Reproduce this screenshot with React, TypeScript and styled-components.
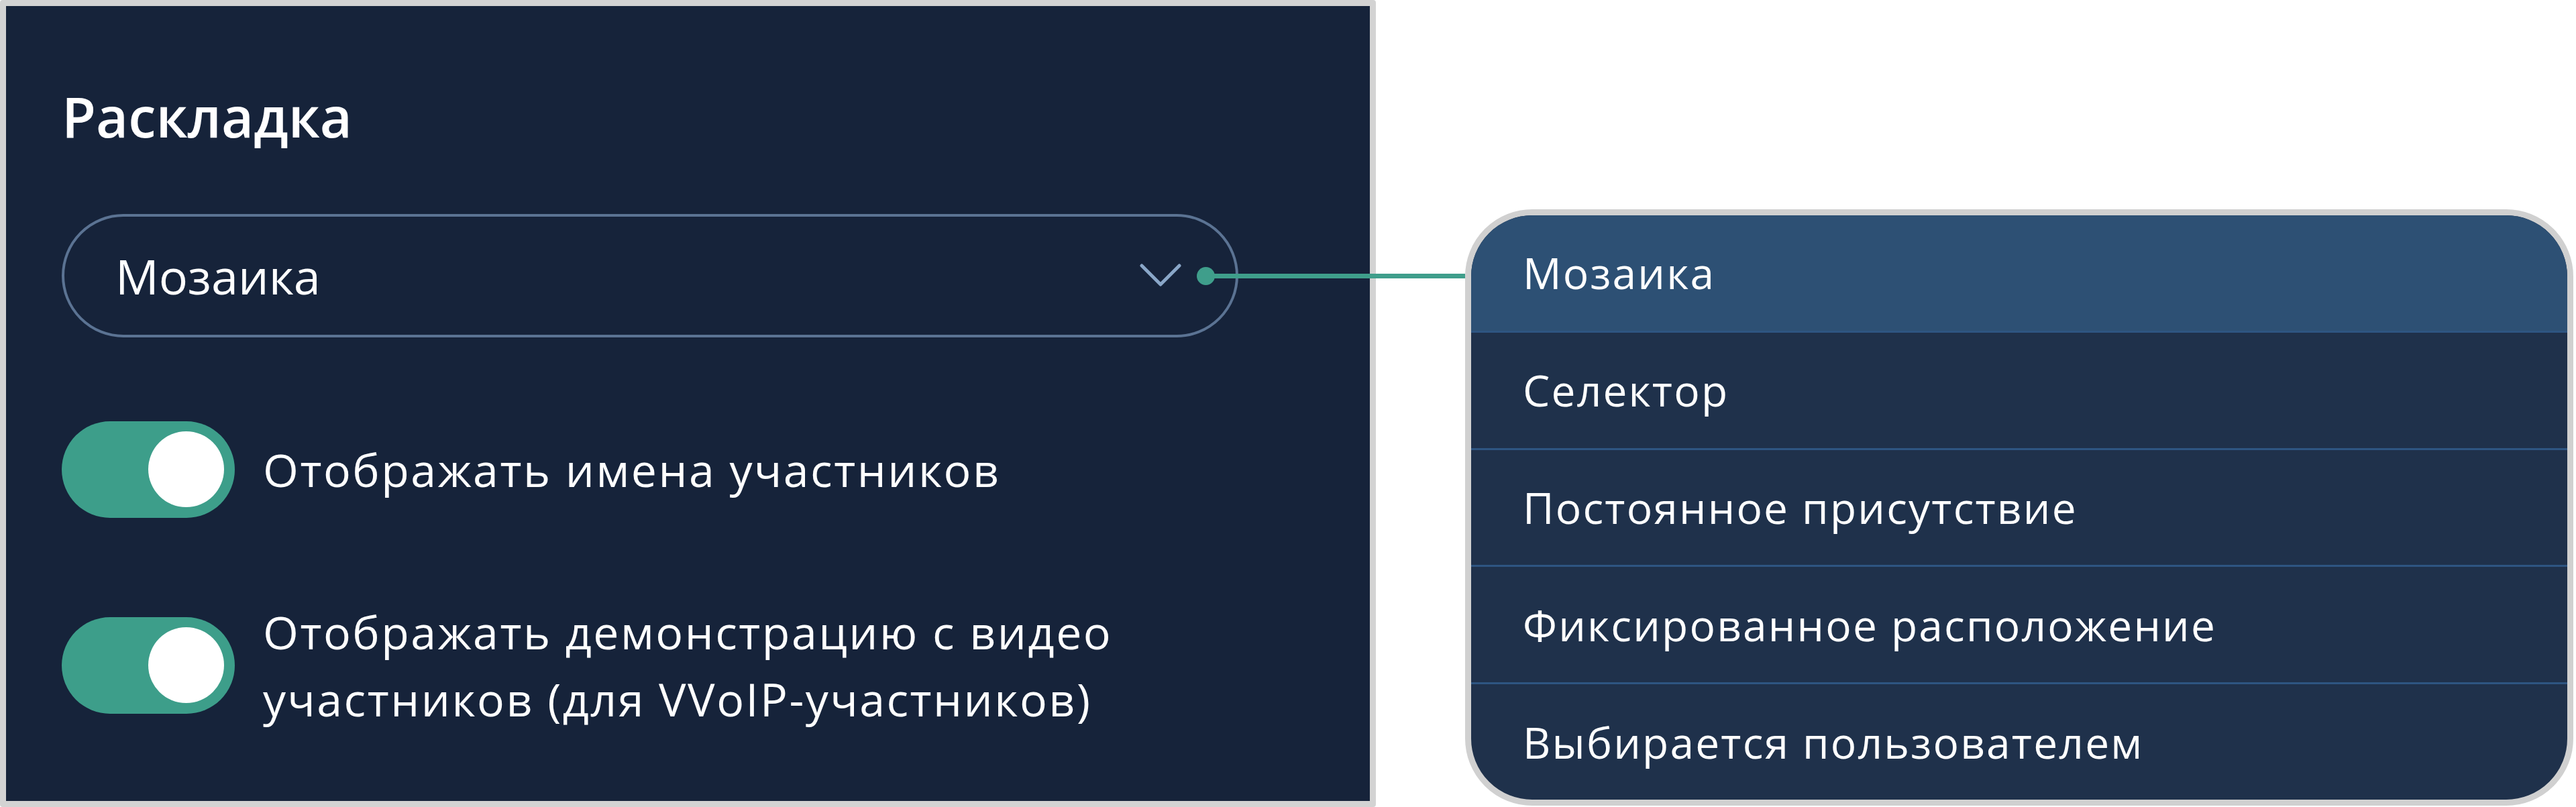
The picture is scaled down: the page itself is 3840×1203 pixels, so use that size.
import { createGlobalStyle } from 'styled-components';
import styled from 'styled-components';

const GlobalStyle = createGlobalStyle`
	html, body {
		margin: 0;
		padding: 0;
		background: #ffffff;
	}

	body {
		font-family: 'Open Sans', 'Noto Sans', sans-serif;
		color: #ffffff;
	}
`;

const LAYOUTS = [
	'Мозаика',
	'Селектор',
	'Постоянное присутствие',
	'Фиксированное расположение',
	'Выбирается пользователем',
];

const OPTIONS = [
	'Отображать имена участников',
	'Отображать демонстрацию с видео участников (для VVoIP-участников)',
];

export default function App() {
	return (
		<>
			<GlobalStyle />
			<Canvas>
				<Panel>
					<Title>Раскладка</Title>
					<Select>
						<SelectValue>{LAYOUTS[0]}</SelectValue>
						<Chevron viewBox="0 0 62 35" aria-hidden>
							<polyline points="3,3 31,31 59,3" />
						</Chevron>
						<DotSpacer />
					</Select>
					<Options>
						{OPTIONS.map((label) => (
							<OptionRow key={label}>
								<Toggle>
									<Knob />
								</Toggle>
								<OptionLabel>{label}</OptionLabel>
							</OptionRow>
						))}
					</Options>
				</Panel>

				<Menu>
					{LAYOUTS.map((item, i) => (
						<MenuItem key={item} $active={i === 0}>
							{item}
						</MenuItem>
					))}
				</Menu>

				{/* callout connecting the select to the expanded list */}
				<Callout>
					<CalloutDot />
					<CalloutLine />
				</Callout>
			</Canvas>
		</>
	);
}

const Canvas = styled.div`
	position: relative;
	display: flex;
	align-items: flex-start;
	width: 3840px;
	height: 1203px;
	overflow: hidden;
`;

const Panel = styled.section`
	box-sizing: border-box;
	flex: none;
	width: 2051px;
	height: 1203px;
	padding: 114px 0 0 83px;
	background: #16233a;
	border: 9px solid #d3d3d3;
	border-radius: 4px;
`;

const Title = styled.h2`
	margin: 0;
	font-size: 83px;
	line-height: 1.2;
	font-weight: 600;
	color: #ffffff;
`;

const Select = styled.div`
	box-sizing: border-box;
	display: flex;
	align-items: center;
	width: 1754px;
	height: 184px;
	margin-top: 96px;
	padding: 0 30px 0 76px;
	border: 4px solid #5b7393;
	border-radius: 92px;
`;

const SelectValue = styled.span`
	flex: 1;
	font-size: 72px;
	line-height: 1;
	color: #ffffff;
`;

const Chevron = styled.svg`
	width: 62px;
	height: 35px;
	fill: none;
	stroke: #8aa7c8;
	stroke-width: 5;
	stroke-linecap: round;
	stroke-linejoin: round;
`;

const DotSpacer = styled.span`
	width: 27px;
	height: 27px;
	margin-left: 24px;
`;

const Options = styled.div`
	display: flex;
	flex-direction: column;
	gap: 120px;
	margin-top: 125px;
`;

const OptionRow = styled.label`
	display: flex;
	align-items: center;
	gap: 42px;
`;

const Toggle = styled.span`
	box-sizing: border-box;
	flex: none;
	display: flex;
	justify-content: flex-end;
	align-items: center;
	width: 258px;
	height: 144px;
	padding-right: 16px;
	border-radius: 72px;
	background: #3d9e8a;
`;

const Knob = styled.span`
	width: 113px;
	height: 113px;
	border-radius: 50%;
	background: #ffffff;
`;

const OptionLabel = styled.span`
	max-width: 1400px;
	font-size: 68px;
	line-height: 100px;
	letter-spacing: 2.5px;
	color: #ffffff;
`;

const Menu = styled.ul`
	box-sizing: border-box;
	flex: none;
	display: flex;
	flex-direction: column;
	width: 1652px;
	height: 889px;
	margin: 312px 0 0 133px;
	padding: 0;
	list-style: none;
	overflow: hidden;
	background: #1f314b;
	border: 9px solid #d0d0d0;
	border-radius: 100px;
`;

const MenuItem = styled.li<{ $active: boolean }>`
	flex: 1;
	display: flex;
	align-items: center;
	padding-left: 77px;
	font-size: 64px;
	letter-spacing: 2.2px;
	color: #ffffff;
	background: ${(p) => (p.$active ? '#2d5074' : 'transparent')};

	& + & {
		border-top: 3px solid #2e5582;
	}
`;

const Callout = styled.div`
	position: absolute;
	left: 1784px;
	top: 398px;
	display: flex;
	align-items: center;
`;

const CalloutDot = styled.span`
	width: 27px;
	height: 27px;
	border-radius: 50%;
	background: #3f9e8b;
`;

const CalloutLine = styled.span`
	width: 386px;
	height: 7px;
	margin-left: -13px;
	background: #3f9e8b;
`;
